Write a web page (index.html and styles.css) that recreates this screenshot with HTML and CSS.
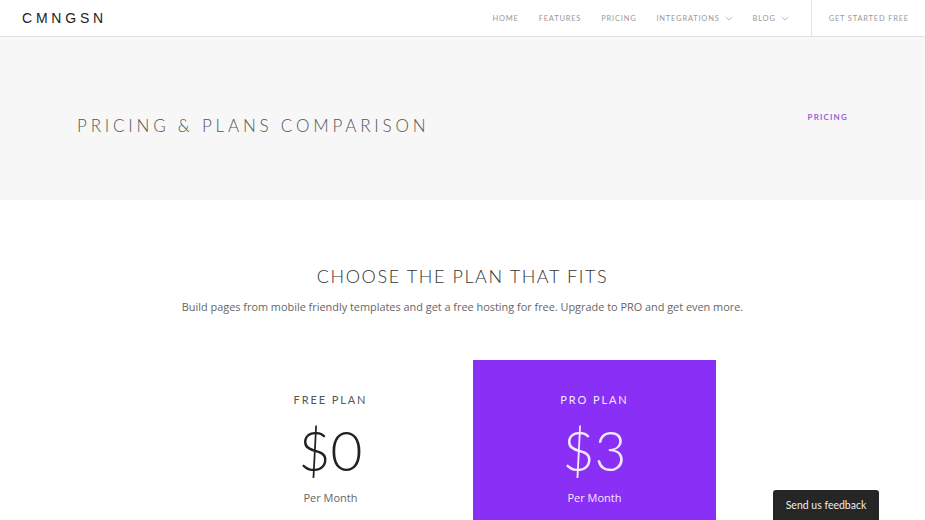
FILE: index.html
```html
<!DOCTYPE html>
<html lang="en">
<head>
  <meta charset="UTF-8" />
  <meta name="viewport" content="width=device-width, initial-scale=1.0" />
  <title>Pricing &amp; Plans Comparison</title>
  <link rel="stylesheet" href="styles.css">
</head>
<body>
  <header class="topbar">
    <a class="logo" href="#">CMNGSN</a>
    <nav class="menu">
      <a href="#">Home</a>
      <a href="#">Features</a>
      <a href="#">Pricing</a>
      <a href="#" class="drop">Integrations
        <svg viewBox="0 0 10 6" width="8" height="5"><path d="M1 1l4 4 4-4" fill="none" stroke="#aaa" stroke-width="1"/></svg>
      </a>
      <a href="#" class="drop">Blog
        <svg viewBox="0 0 10 6" width="8" height="5"><path d="M1 1l4 4 4-4" fill="none" stroke="#aaa" stroke-width="1"/></svg>
      </a>
    </nav>
    <a class="cta" href="#">Get Started Free</a>
  </header>

  <section class="hero">
    <h1>Pricing &amp; Plans Comparison</h1>
    <span class="crumb">Pricing</span>
  </section>

  <section class="plans">
    <h2>Choose the plan that fits</h2>
    <p class="lead">Build pages from mobile friendly templates and get a free hosting for free. Upgrade to PRO and get even more.</p>

    <div class="cards">
      <div class="card">
        <h3>Free Plan</h3>
        <div class="price">$0</div>
        <div class="period">Per Month</div>
      </div>
      <div class="card pro">
        <h3>Pro Plan</h3>
        <div class="price">$3</div>
        <div class="period">Per Month</div>
      </div>
    </div>
  </section>

  <button class="feedback">Send us feedback</button>
</body>
</html>
```

FILE: styles.css
```css
body {
  margin: 0;
  font-family: "Open Sans", sans-serif;
  background-color: #fff;
  color: #333;
  overflow: hidden;
}
a {
  text-decoration: none;
}
.topbar {
  display: flex;
  align-items: center;
  height: 36px;
  border-bottom: 1px solid #e3e3e3;
}
.logo {
  font-family: "Liberation Sans", Arial, sans-serif;
  font-size: 14px;
  letter-spacing: 3.8px;
  color: #222;
  margin-left: 22px;
}
.menu {
  display: flex;
  margin-left: auto;
  height: 100%;
  align-items: center;
  gap: 20px;
  padding-right: 22px;
  border-right: 1px solid #e3e3e3;
}
.menu a,
.cta {
  font-family: "Lato", sans-serif;
  font-size: 7.5px;
  letter-spacing: 0.8px;
  text-transform: uppercase;
  color: #999;
}
.drop {
  display: flex;
  align-items: center;
  gap: 5px;
}
.cta {
  padding: 0 16px 0 17px;
}
.hero {
  display: flex;
  align-items: center;
  justify-content: space-between;
  height: 163px;
  box-sizing: border-box;
  padding: 14px 77px 0;
  background-color: #f7f7f7;
}
.hero h1 {
  margin: 0;
  font-family: "Lato", sans-serif;
  font-weight: 300;
  font-size: 17px;
  letter-spacing: 3.8px;
  text-transform: uppercase;
  color: #555;
}
.crumb {
  font-family: "Lato", sans-serif;
  font-size: 8px;
  font-weight: 700;
  letter-spacing: 1.2px;
  text-transform: uppercase;
  color: #9b5fd6;
  margin-bottom: 17px;
}
.plans {
  text-align: center;
  padding-top: 65px;
}
.plans h2 {
  margin: 0;
  font-family: "Lato", sans-serif;
  font-weight: 300;
  font-size: 18px;
  letter-spacing: 1.6px;
  text-transform: uppercase;
  color: #333;
}
.lead {
  margin: 12px 0 0;
  font-size: 10.9px;
  color: #666;
}
.cards {
  display: flex;
  justify-content: center;
  gap: 21px;
  margin-top: 46px;
}
.card {
  width: 243px;
  height: 200px;
  padding-top: 33px;
  box-sizing: border-box;
}
.card h3 {
  margin: 0;
  font-family: "Lato", sans-serif;
  font-weight: 400;
  font-size: 11px;
  letter-spacing: 1.9px;
  text-transform: uppercase;
  color: #555;
}
.price {
  font-family: "Lato", sans-serif;
  font-weight: 300;
  font-size: 55px;
  line-height: 1;
  margin-top: 17px;
  color: #222;
}
.period {
  margin-top: 12px;
  font-size: 11px;
  color: #666;
}
.pro {
  background-color: #8a2ff5;
}
.pro h3,
.pro .price,
.pro .period {
  color: #f3eaff;
}
.feedback {
  position: fixed;
  right: 46px;
  bottom: 0;
  width: 106px;
  height: 30px;
  border: none;
  border-radius: 3px 3px 0 0;
  background-color: #262626;
  color: #eee;
  font-family: "Lato", sans-serif;
  font-size: 10.5px;
  cursor: pointer;
}
```
